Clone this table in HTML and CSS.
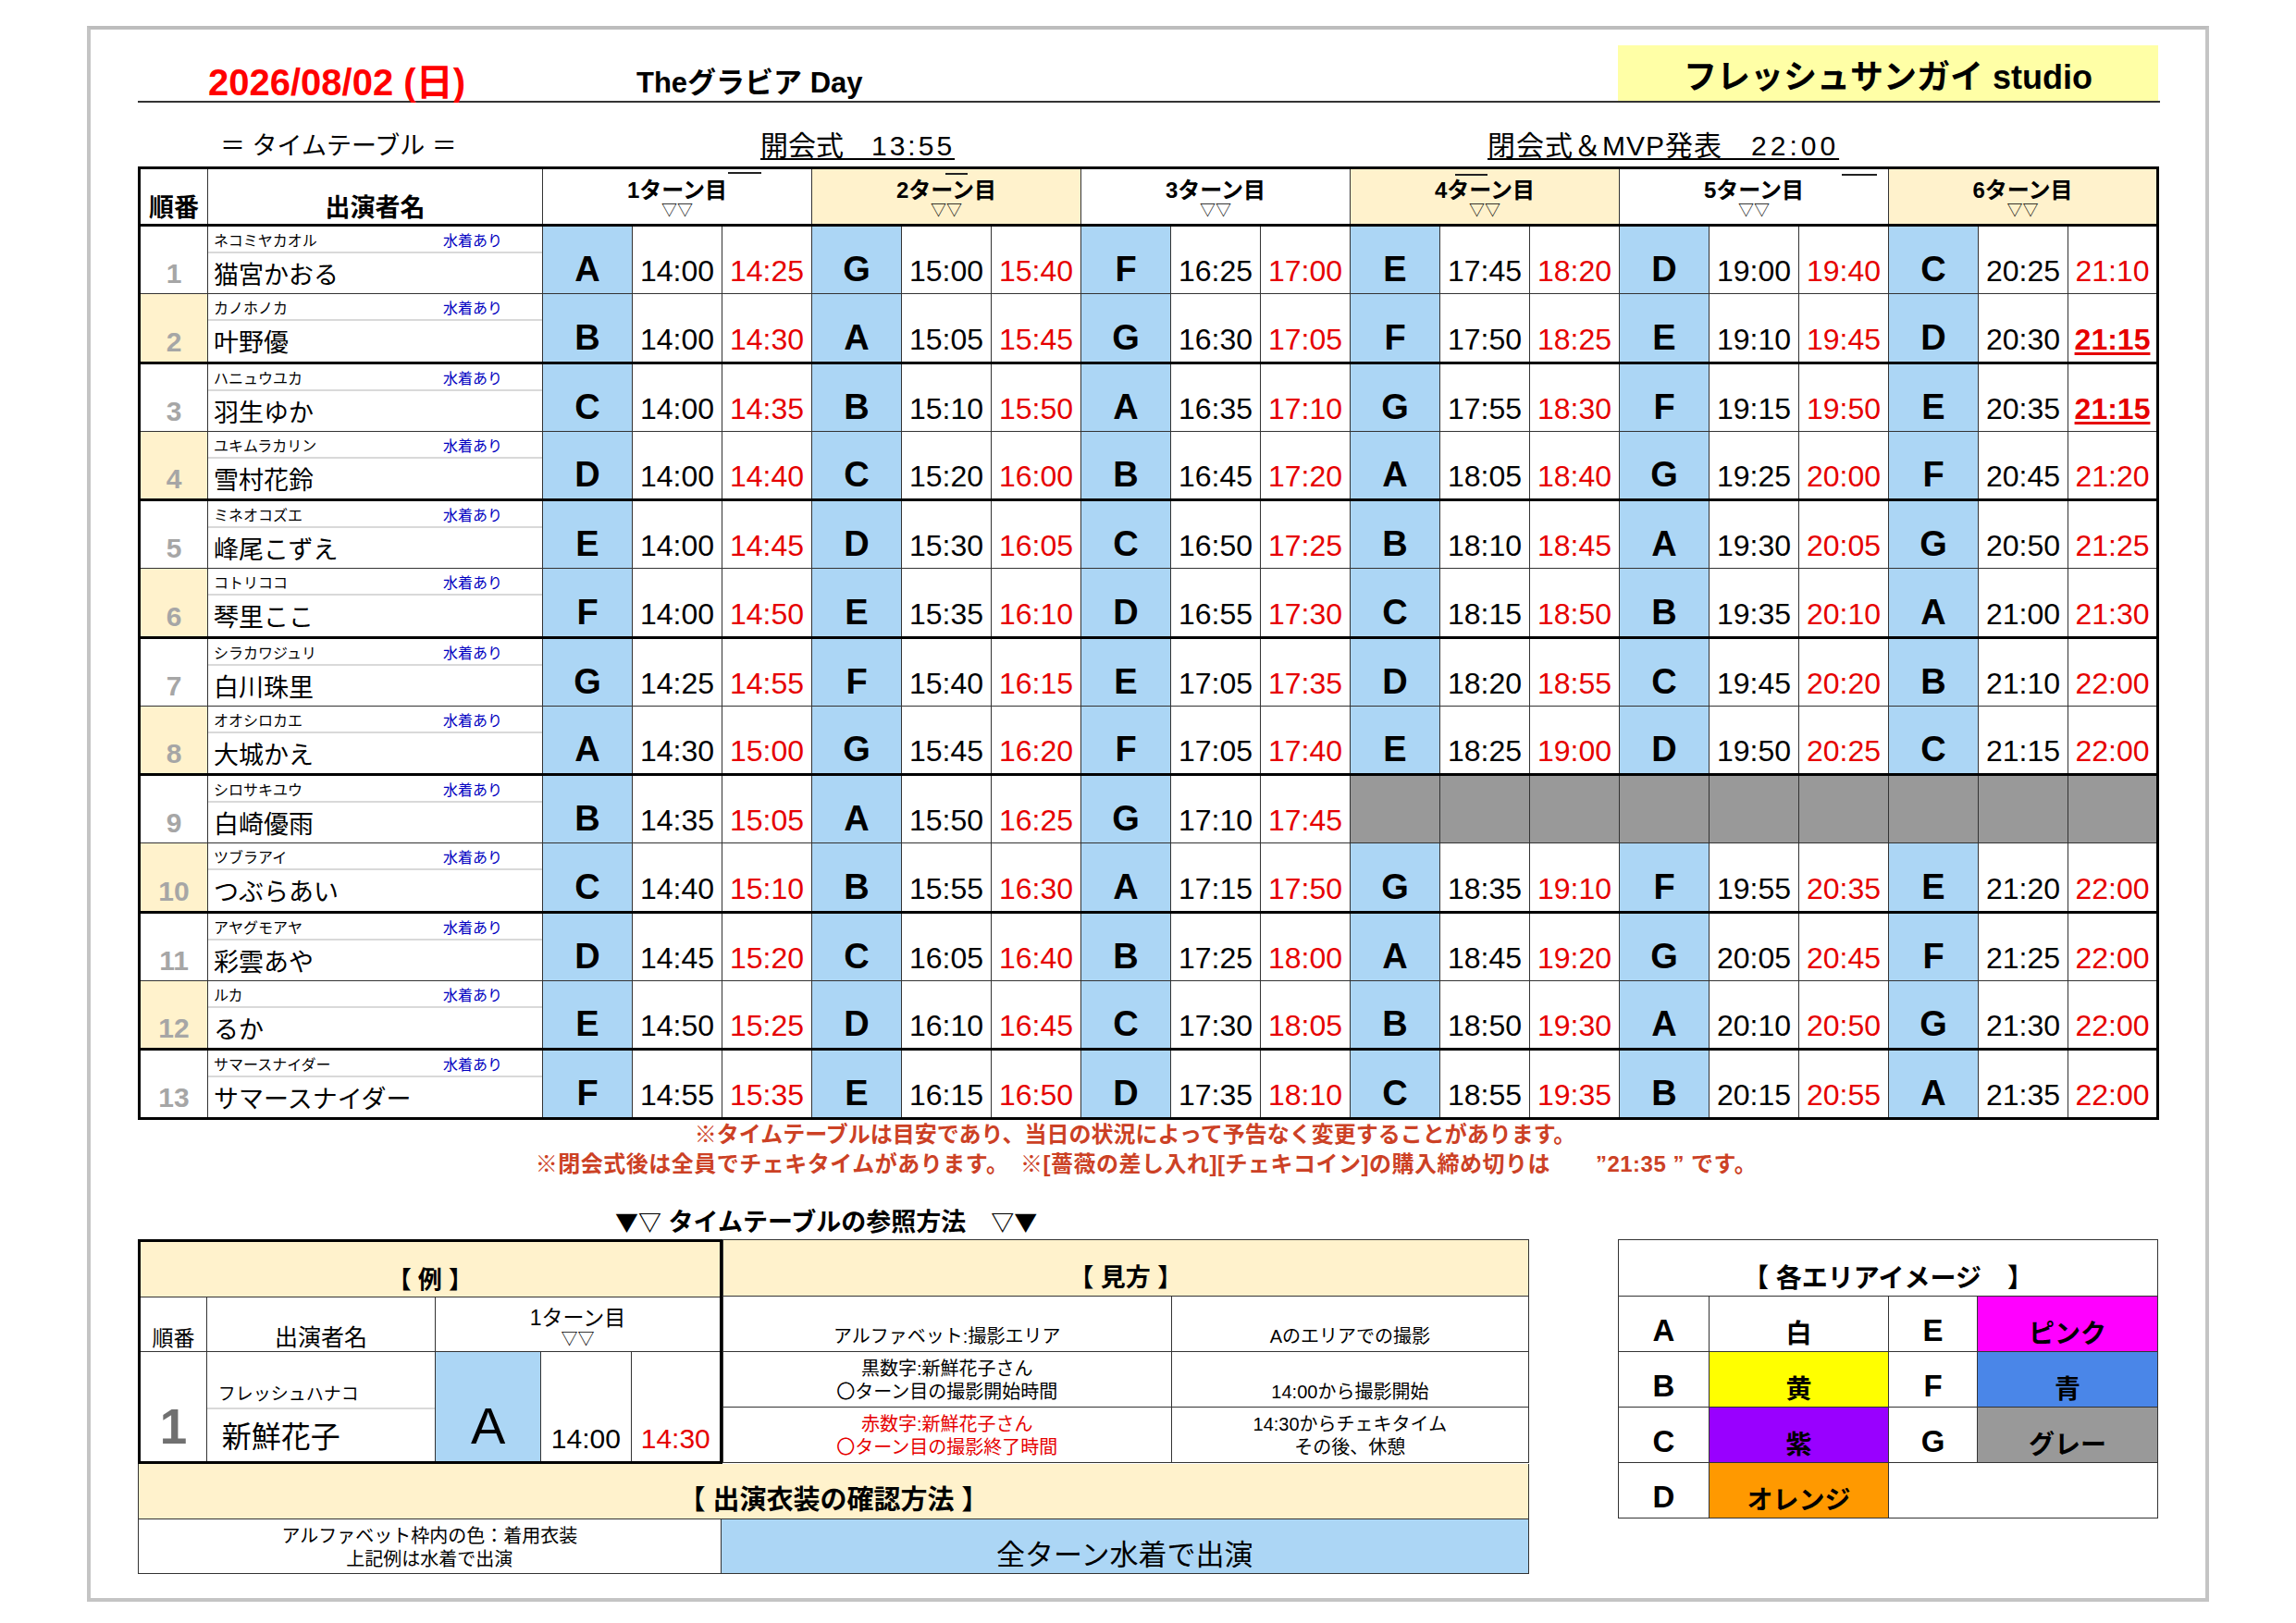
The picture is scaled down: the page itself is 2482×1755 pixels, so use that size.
FILE: index.html
```html
<!DOCTYPE html>
<html lang="ja">
<head>
<meta charset="utf-8">
<title>タイムテーブル</title>
<link rel="stylesheet" href="styles.css">
</head>
<body>
<div class="frame">
<div class="wrap">
  <div class="head">
    <div class="date">2026/08/02 (日)</div>
    <div class="title">Theグラビア Day</div>
    <div class="studio">フレッシュサンガイ studio</div>
  </div>
  <div class="sub">
    <div class="tt">＝ タイムテーブル ＝</div>
    <div class="op"><span class="u">開会式　<span class="dg">13:55</span></span></div>
    <div class="cl"><span class="u">閉会式＆MVP発表　<span class="dg">22:00</span></span></div>
  </div>

  <table class="main">
    <colgroup>
      <col class="c-no"><col class="c-nm">
      <col class="c-t"><col class="c-t"><col class="c-t">
      <col class="c-t"><col class="c-t"><col class="c-t">
      <col class="c-t"><col class="c-t"><col class="c-t">
      <col class="c-t"><col class="c-t"><col class="c-t">
      <col class="c-t"><col class="c-t"><col class="c-t">
      <col class="c-t"><col class="c-t"><col class="c-t">
    </colgroup>
    <tr class="hd">
      <th class="hno">順番</th>
      <th class="hnm">出演者名</th>
      <th class="ht" colspan="3"><div class="hin"><div class="t">1ターン目</div><div class="v">▽▽</div><i class="ov ov1"></i></div></th>
      <th class="ht cr" colspan="3"><div class="hin"><div class="t">2ターン目</div><div class="v">▽▽</div><i class="ov ov2"></i></div></th>
      <th class="ht" colspan="3"><div class="hin"><div class="t">3ターン目</div><div class="v">▽▽</div></div></th>
      <th class="ht cr" colspan="3"><div class="hin"><div class="t">4ターン目</div><div class="v">▽▽</div><i class="ov ov4"></i></div></th>
      <th class="ht" colspan="3"><div class="hin"><div class="t">5ターン目</div><div class="v">▽▽</div><i class="ov ov5"></i></div></th>
      <th class="ht cr" colspan="3"><div class="hin"><div class="t">6ターン目</div><div class="v">▽▽</div></div></th>
    </tr>
    <tr class="po"><td class="no">1</td><td class="nm"><div class="kana"><span>ネコミヤカオル</span><span class="sw">水着あり</span></div><div class="name">猫宮かおる</div></td>
      <td class="L">A</td><td class="s">14:00</td><td class="e">14:25</td><td class="L">G</td><td class="s">15:00</td><td class="e">15:40</td><td class="L">F</td><td class="s">16:25</td><td class="e">17:00</td><td class="L">E</td><td class="s">17:45</td><td class="e">18:20</td><td class="L">D</td><td class="s">19:00</td><td class="e">19:40</td><td class="L">C</td><td class="s">20:25</td><td class="e">21:10</td></tr>
    <tr class="pe"><td class="no">2</td><td class="nm"><div class="kana"><span>カノホノカ</span><span class="sw">水着あり</span></div><div class="name">叶野優</div></td>
      <td class="L">B</td><td class="s">14:00</td><td class="e">14:30</td><td class="L">A</td><td class="s">15:05</td><td class="e">15:45</td><td class="L">G</td><td class="s">16:30</td><td class="e">17:05</td><td class="L">F</td><td class="s">17:50</td><td class="e">18:25</td><td class="L">E</td><td class="s">19:10</td><td class="e">19:45</td><td class="L">D</td><td class="s">20:30</td><td class="e b"><span>21:15</span></td></tr>
    <tr class="po"><td class="no">3</td><td class="nm"><div class="kana"><span>ハニュウユカ</span><span class="sw">水着あり</span></div><div class="name">羽生ゆか</div></td>
      <td class="L">C</td><td class="s">14:00</td><td class="e">14:35</td><td class="L">B</td><td class="s">15:10</td><td class="e">15:50</td><td class="L">A</td><td class="s">16:35</td><td class="e">17:10</td><td class="L">G</td><td class="s">17:55</td><td class="e">18:30</td><td class="L">F</td><td class="s">19:15</td><td class="e">19:50</td><td class="L">E</td><td class="s">20:35</td><td class="e b"><span>21:15</span></td></tr>
    <tr class="pe"><td class="no">4</td><td class="nm"><div class="kana"><span>ユキムラカリン</span><span class="sw">水着あり</span></div><div class="name">雪村花鈴</div></td>
      <td class="L">D</td><td class="s">14:00</td><td class="e">14:40</td><td class="L">C</td><td class="s">15:20</td><td class="e">16:00</td><td class="L">B</td><td class="s">16:45</td><td class="e">17:20</td><td class="L">A</td><td class="s">18:05</td><td class="e">18:40</td><td class="L">G</td><td class="s">19:25</td><td class="e">20:00</td><td class="L">F</td><td class="s">20:45</td><td class="e">21:20</td></tr>
    <tr class="po"><td class="no">5</td><td class="nm"><div class="kana"><span>ミネオコズエ</span><span class="sw">水着あり</span></div><div class="name">峰尾こずえ</div></td>
      <td class="L">E</td><td class="s">14:00</td><td class="e">14:45</td><td class="L">D</td><td class="s">15:30</td><td class="e">16:05</td><td class="L">C</td><td class="s">16:50</td><td class="e">17:25</td><td class="L">B</td><td class="s">18:10</td><td class="e">18:45</td><td class="L">A</td><td class="s">19:30</td><td class="e">20:05</td><td class="L">G</td><td class="s">20:50</td><td class="e">21:25</td></tr>
    <tr class="pe"><td class="no">6</td><td class="nm"><div class="kana"><span>コトリココ</span><span class="sw">水着あり</span></div><div class="name">琴里ここ</div></td>
      <td class="L">F</td><td class="s">14:00</td><td class="e">14:50</td><td class="L">E</td><td class="s">15:35</td><td class="e">16:10</td><td class="L">D</td><td class="s">16:55</td><td class="e">17:30</td><td class="L">C</td><td class="s">18:15</td><td class="e">18:50</td><td class="L">B</td><td class="s">19:35</td><td class="e">20:10</td><td class="L">A</td><td class="s">21:00</td><td class="e">21:30</td></tr>
    <tr class="po"><td class="no">7</td><td class="nm"><div class="kana"><span>シラカワジュリ</span><span class="sw">水着あり</span></div><div class="name">白川珠里</div></td>
      <td class="L">G</td><td class="s">14:25</td><td class="e">14:55</td><td class="L">F</td><td class="s">15:40</td><td class="e">16:15</td><td class="L">E</td><td class="s">17:05</td><td class="e">17:35</td><td class="L">D</td><td class="s">18:20</td><td class="e">18:55</td><td class="L">C</td><td class="s">19:45</td><td class="e">20:20</td><td class="L">B</td><td class="s">21:10</td><td class="e">22:00</td></tr>
    <tr class="pe"><td class="no">8</td><td class="nm"><div class="kana"><span>オオシロカエ</span><span class="sw">水着あり</span></div><div class="name">大城かえ</div></td>
      <td class="L">A</td><td class="s">14:30</td><td class="e">15:00</td><td class="L">G</td><td class="s">15:45</td><td class="e">16:20</td><td class="L">F</td><td class="s">17:05</td><td class="e">17:40</td><td class="L">E</td><td class="s">18:25</td><td class="e">19:00</td><td class="L">D</td><td class="s">19:50</td><td class="e">20:25</td><td class="L">C</td><td class="s">21:15</td><td class="e">22:00</td></tr>
    <tr class="po"><td class="no">9</td><td class="nm"><div class="kana"><span>シロサキユウ</span><span class="sw">水着あり</span></div><div class="name">白崎優雨</div></td>
      <td class="L">B</td><td class="s">14:35</td><td class="e">15:05</td><td class="L">A</td><td class="s">15:50</td><td class="e">16:25</td><td class="L">G</td><td class="s">17:10</td><td class="e">17:45</td><td class="gy"></td><td class="gy"></td><td class="gy"></td><td class="gy"></td><td class="gy"></td><td class="gy"></td><td class="gy"></td><td class="gy"></td><td class="gy"></td></tr>
    <tr class="pe"><td class="no">10</td><td class="nm"><div class="kana"><span>ツブラアイ</span><span class="sw">水着あり</span></div><div class="name">つぶらあい</div></td>
      <td class="L">C</td><td class="s">14:40</td><td class="e">15:10</td><td class="L">B</td><td class="s">15:55</td><td class="e">16:30</td><td class="L">A</td><td class="s">17:15</td><td class="e">17:50</td><td class="L">G</td><td class="s">18:35</td><td class="e">19:10</td><td class="L">F</td><td class="s">19:55</td><td class="e">20:35</td><td class="L">E</td><td class="s">21:20</td><td class="e">22:00</td></tr>
    <tr class="po"><td class="no">11</td><td class="nm"><div class="kana"><span>アヤグモアヤ</span><span class="sw">水着あり</span></div><div class="name">彩雲あや</div></td>
      <td class="L">D</td><td class="s">14:45</td><td class="e">15:20</td><td class="L">C</td><td class="s">16:05</td><td class="e">16:40</td><td class="L">B</td><td class="s">17:25</td><td class="e">18:00</td><td class="L">A</td><td class="s">18:45</td><td class="e">19:20</td><td class="L">G</td><td class="s">20:05</td><td class="e">20:45</td><td class="L">F</td><td class="s">21:25</td><td class="e">22:00</td></tr>
    <tr class="pe"><td class="no">12</td><td class="nm"><div class="kana"><span>ルカ</span><span class="sw">水着あり</span></div><div class="name">るか</div></td>
      <td class="L">E</td><td class="s">14:50</td><td class="e">15:25</td><td class="L">D</td><td class="s">16:10</td><td class="e">16:45</td><td class="L">C</td><td class="s">17:30</td><td class="e">18:05</td><td class="L">B</td><td class="s">18:50</td><td class="e">19:30</td><td class="L">A</td><td class="s">20:10</td><td class="e">20:50</td><td class="L">G</td><td class="s">21:30</td><td class="e">22:00</td></tr>
    <tr class="po last"><td class="no">13</td><td class="nm"><div class="kana"><span>サマースナイダー</span><span class="sw">水着あり</span></div><div class="name">サマースナイダー</div></td>
      <td class="L">F</td><td class="s">14:55</td><td class="e">15:35</td><td class="L">E</td><td class="s">16:15</td><td class="e">16:50</td><td class="L">D</td><td class="s">17:35</td><td class="e">18:10</td><td class="L">C</td><td class="s">18:55</td><td class="e">19:35</td><td class="L">B</td><td class="s">20:15</td><td class="e">20:55</td><td class="L">A</td><td class="s">21:35</td><td class="e">22:00</td></tr>
  </table>

  <div class="notes">
    <div class="n1">※タイムテーブルは目安であり、当日の状況によって予告なく変更することがあります。</div>
    <div class="n2">※閉会式後は全員でチェキタイムがあります。　※[薔薇の差し入れ][チェキコイン]の購入締め切りは　　”21:35 ” です。</div>
  </div>

  <div class="how"><span class="tri">▼▽</span> タイムテーブルの参照方法　<span class="tri">▽▼</span></div>

  <div class="bottom">
    <div class="left">
      <div class="toprow">
        <table class="ex">
          <colgroup><col class="e1"><col class="e2"><col class="e3"><col class="e4"><col class="e5"></colgroup>
          <tr class="er1"><td class="cap cr" colspan="5">【 例 】</td></tr>
          <tr class="er2">
            <td class="eh-no">順番</td>
            <td class="eh-nm">出演者名</td>
            <td class="eh-t" colspan="3"><div class="t">1ターン目</div><div class="v">▽▽</div></td>
          </tr>
          <tr class="er3">
            <td class="eno">1</td>
            <td class="enm"><div class="ekana">フレッシュハナコ</div><div class="ename">新鮮花子</div></td>
            <td class="eL">A</td>
            <td class="et">14:00</td>
            <td class="et red">14:30</td>
          </tr>
        </table>
        <table class="mk">
          <colgroup><col class="m1"><col class="m2"></colgroup>
          <tr class="mr1"><td class="cap cr" colspan="2">【 見方 】</td></tr>
          <tr class="mr"><td class="mt">アルファベット:撮影エリア</td><td class="mt">Aのエリアでの撮影</td></tr>
          <tr class="mr"><td class="mt">黒数字:新鮮花子さん<br>〇ターン目の撮影開始時間</td><td class="mt">14:00から撮影開始</td></tr>
          <tr class="mr"><td class="mt red">赤数字:新鮮花子さん<br>〇ターン目の撮影終了時間</td><td class="mt">14:30からチェキタイム<br>その後、休憩</td></tr>
        </table>
      </div>
      <table class="cos">
        <colgroup><col class="k1"><col class="k2"></colgroup>
        <tr class="kr1"><td class="cap2 cr" colspan="2">【 出演衣装の確認方法 】</td></tr>
        <tr class="kr2"><td class="kt">アルファベット枠内の色：着用衣装<br>上記例は水着で出演</td><td class="kb">全ターン水着で出演</td></tr>
      </table>
    </div>

    <table class="lg">
      <colgroup><col class="g1"><col class="g2"><col class="g3"><col class="g4"></colgroup>
      <tr class="gr1"><td class="lh" colspan="4">【 各エリアイメージ　】</td></tr>
      <tr class="gr"><td class="k">A</td><td class="c">白</td><td class="k">E</td><td class="c pink">ピンク</td></tr>
      <tr class="gr"><td class="k">B</td><td class="c yel">黄</td><td class="k">F</td><td class="c blu">青</td></tr>
      <tr class="gr"><td class="k">C</td><td class="c pur">紫</td><td class="k">G</td><td class="c gry">グレー</td></tr>
      <tr class="gr"><td class="k">D</td><td class="c org">オレンジ</td><td class="emp" colspan="2"></td></tr>
    </table>
  </div>
</div>
</div>
</body>
</html>
```

FILE: styles.css
```css
* { box-sizing: border-box; }
html, body { margin: 0; padding: 0; background: #fff; }
body {
  font-family: "Liberation Sans", "Noto Sans CJK JP", sans-serif;
  color: #000;
  width: 2482px;
  height: 1755px;
  overflow: hidden;
}
.frame {
  margin: 28px 0 0 94px;
  width: 2294px;
  height: 1704px;
  border: 4px solid #c4c4c4;
  border-top-color: #bdbdbd;
  padding: 17px 0 0 51px;
}
.wrap { width: 2186px; }

/* header */
.head {
  display: grid;
  grid-template-columns: 76px 463px 1061px 584px;
  height: 62px;
  border-bottom: 2px solid #333;
}
.date {
  grid-column: 2;
  align-self: end;
  font-weight: bold;
  font-size: 40px;
  line-height: 40px;
  color: #f00;
  white-space: nowrap;
}
.title {
  grid-column: 3;
  align-self: end;
  font-weight: bold;
  font-size: 31px;
  line-height: 31px;
  padding-bottom: 4px;
  white-space: nowrap;
}
.studio {
  grid-column: 4;
  background: #ffffa6;
  display: flex;
  align-items: flex-end;
  justify-content: center;
  font-weight: bold;
  font-size: 36px;
  line-height: 36px;
  padding-bottom: 7px;
  white-space: nowrap;
}

.sub {
  display: grid;
  grid-template-columns: 89px 584px 786px auto;
  height: 69px;
  align-items: end;
}
.sub > div {
  font-size: 30px;
  line-height: 30px;
  padding-bottom: 7px;
  white-space: nowrap;
}
.sub .tt { grid-column: 2; font-size: 27px; }
.sub .op { grid-column: 3; }
.sub .cl { grid-column: 4; letter-spacing: 1px; }
.u {
  text-decoration: underline;
  text-decoration-thickness: 2px;
  text-underline-offset: 3px;
}
.dg { letter-spacing: 3px; }
.cl .dg { letter-spacing: 4px; }

/* main table */
table { border-collapse: collapse; table-layout: fixed; }
.main { border: 3px solid #000; }
.c-no { width: 74px; }
.c-nm { width: 362px; }
.c-t { width: 97px; }
.main td, .main th { border: 1px solid #333; padding: 0; }
.main th { border-bottom: 3px solid #000; font-weight: bold; }
.main tr.hd { height: 62px; }
.main tr.po, .main tr.pe { height: 74.25px; }
.main tr.pe td { border-bottom: 3px solid #000; }
.hno, .hnm {
  font-size: 27px;
  line-height: 27px;
  vertical-align: bottom;
  text-align: center;
  padding-bottom: 3px !important;
}
.ht { vertical-align: top; padding-top: 10px !important; text-align: center; }
.hin { position: relative; }
.ht .t { font-size: 24px; line-height: 26px; }
.ht .v { font-size: 17px; line-height: 18px; font-weight: normal; }
.ov { position: absolute; height: 2px; background: #222; }
.ov1 { left: 200px; width: 36px; top: -7px; }
.ov2 { left: 144px; width: 24px; top: -6px; }
.ov4 { left: 113px; width: 35px; top: -5px; }
.ov5 { left: 240px; width: 38px; top: -5px; }
.cr { background: #fff2cc; }

.no {
  font-weight: bold;
  font-size: 30px;
  line-height: 30px;
  color: #a6a6a6;
  text-align: center;
  vertical-align: bottom;
  padding-bottom: 6px !important;
}
tr.pe .no { background: #fff2cc; }
.nm { vertical-align: top; }
.kana {
  height: 29px;
  border-bottom: 2px solid #d9d9d9;
  display: flex;
  justify-content: space-between;
  align-items: flex-end;
  padding: 0 43px 3px 6px;
  font-size: 16px;
  line-height: 16px;
  white-space: nowrap;
}
.sw { color: #0000c0; }
.name {
  height: 43px;
  display: flex;
  align-items: flex-end;
  padding: 0 0 5px 6px;
  font-size: 27px;
  line-height: 27px;
  white-space: nowrap;
}
.L {
  background: #acd6f5;
  font-weight: bold;
  font-size: 38px;
  line-height: 38px;
  text-align: center;
  vertical-align: bottom;
  padding-bottom: 7px !important;
}
.s, .e {
  font-size: 32px;
  line-height: 32px;
  text-align: center;
  vertical-align: bottom;
  padding-bottom: 8px !important;
  white-space: nowrap;
}
.e { color: #e60000; }
.e.b { font-weight: bold; }
.e.b span {
  text-decoration: underline;
  text-decoration-thickness: 3px;
  text-underline-offset: 3px;
}
.gy { background: #999; }

/* notes */
.notes {
  margin-top: 0;
  text-align: center;
  color: #cc4125;
  font-weight: bold;
  font-size: 24px;
  line-height: 32px;
  white-space: nowrap;
}
.notes .n1 { padding-right: 30px; }
.notes .n2 { letter-spacing: 0.5px; padding-right: 6px; }
.how {
  margin-top: 30px;
  padding-left: 516px;
  font-weight: bold;
  font-size: 27px;
  line-height: 30px;
  white-space: nowrap;
}
.tri { font-family: "Noto Sans CJK JP", sans-serif; font-size: 25px; }

/* bottom area */
.bottom { display: flex; align-items: flex-start; margin-top: 3px; }
.left { width: 1504px; }
.toprow { display: flex; align-items: flex-start; }

.ex { border: 3px solid #000; }
.ex td { border: 1px solid #333; padding: 0; text-align: center; }
.e1 { width: 73px; }
.e2 { width: 248px; }
.e3 { width: 114px; }
.e4 { width: 98px; }
.e5 { width: 97px; }
.er1 { height: 61px; }
.er2 { height: 59px; }
.er3 { height: 120px; }
.cap {
  font-weight: bold;
  font-size: 26px;
  line-height: 26px;
  vertical-align: bottom;
  padding-bottom: 5px !important;
}
.mk .cap { font-size: 27px; line-height: 27px; }
.eh-no { font-size: 23px; line-height: 23px; vertical-align: bottom; padding-bottom: 2px !important; }
.eh-nm { font-size: 25px; line-height: 25px; vertical-align: bottom; padding-bottom: 2px !important; }
.eh-t { vertical-align: bottom; padding-bottom: 3px !important; }
.eh-t .t { font-size: 23px; line-height: 26px; }
.eh-t .v { font-size: 18px; line-height: 20px; }
.eno {
  font-weight: bold;
  font-size: 53px;
  line-height: 53px;
  color: #707070;
  vertical-align: bottom;
  padding-bottom: 11px !important;
}
.enm { vertical-align: top; text-align: left !important; }
.ekana {
  height: 62px;
  border-bottom: 2px solid #d9d9d9;
  display: flex;
  align-items: flex-end;
  padding: 0 0 5px 12px;
  font-size: 19px;
  line-height: 19px;
  white-space: nowrap;
}
.ename {
  height: 56px;
  display: flex;
  align-items: flex-end;
  padding: 0 0 10px 16px;
  font-size: 32px;
  line-height: 32px;
  white-space: nowrap;
}
.eL {
  background: #acd6f5;
  font-size: 56px;
  line-height: 56px;
  vertical-align: bottom;
  padding-bottom: 10px !important;
}
.et {
  font-size: 30px;
  line-height: 30px;
  vertical-align: bottom;
  padding-bottom: 9px !important;
  white-space: nowrap;
}
.red { color: #e60000; }

.mk { border: 1px solid #333; border-left: none; }
.mk td { border: 1px solid #333; padding: 0; text-align: center; }
.m1 { width: 486px; }
.m2 { width: 387px; }
.mr1 { height: 61px; }
.mr { height: 60px; }
.mt {
  font-size: 20px;
  line-height: 25px;
  vertical-align: bottom;
  padding-bottom: 3px !important;
  white-space: nowrap;
}

.cos { border: 1px solid #333; border-top: none; }
.cos td { border: 1px solid #333; padding: 0; text-align: center; }
.cos tr.kr1 td { border-top: none; }
.k1 { width: 630px; }
.k2 { width: 874px; }
.kr1 { height: 59px; }
.kr2 { height: 59px; }
.cap2 {
  font-weight: bold;
  font-size: 29px;
  line-height: 29px;
  vertical-align: bottom;
  padding-bottom: 5px !important;
}
.kt {
  font-size: 20px;
  line-height: 25px;
  vertical-align: bottom;
  padding-bottom: 2px !important;
  white-space: nowrap;
}
.kb {
  background: #acd6f5;
  font-size: 31px;
  line-height: 31px;
  vertical-align: bottom;
  padding-bottom: 4px !important;
  white-space: nowrap;
}

/* legend */
.lg { margin-left: 96px; border: 1px solid #333; }
.lg td { border: 1px solid #333; padding: 0; text-align: center; vertical-align: bottom; }
.g1 { width: 98px; }
.g2 { width: 194px; }
.g3 { width: 96px; }
.g4 { width: 195px; }
.gr1 { height: 61px; }
.gr { height: 60px; }
.lh {
  font-weight: bold;
  font-size: 28px;
  line-height: 28px;
  padding-bottom: 4px !important;
  white-space: nowrap;
}
.lg .k {
  font-weight: bold;
  font-size: 33px;
  line-height: 33px;
  padding-bottom: 6px !important;
}
.lg .c {
  font-weight: bold;
  font-size: 28px;
  line-height: 28px;
  padding-bottom: 4px !important;
  white-space: nowrap;
}
.pink { background: #ff00ff; }
.yel { background: #ffff00; }
.blu { background: #4a86e8; }
.pur { background: #9900ff; }
.gry { background: #999999; }
.org { background: #ff9900; }
```
